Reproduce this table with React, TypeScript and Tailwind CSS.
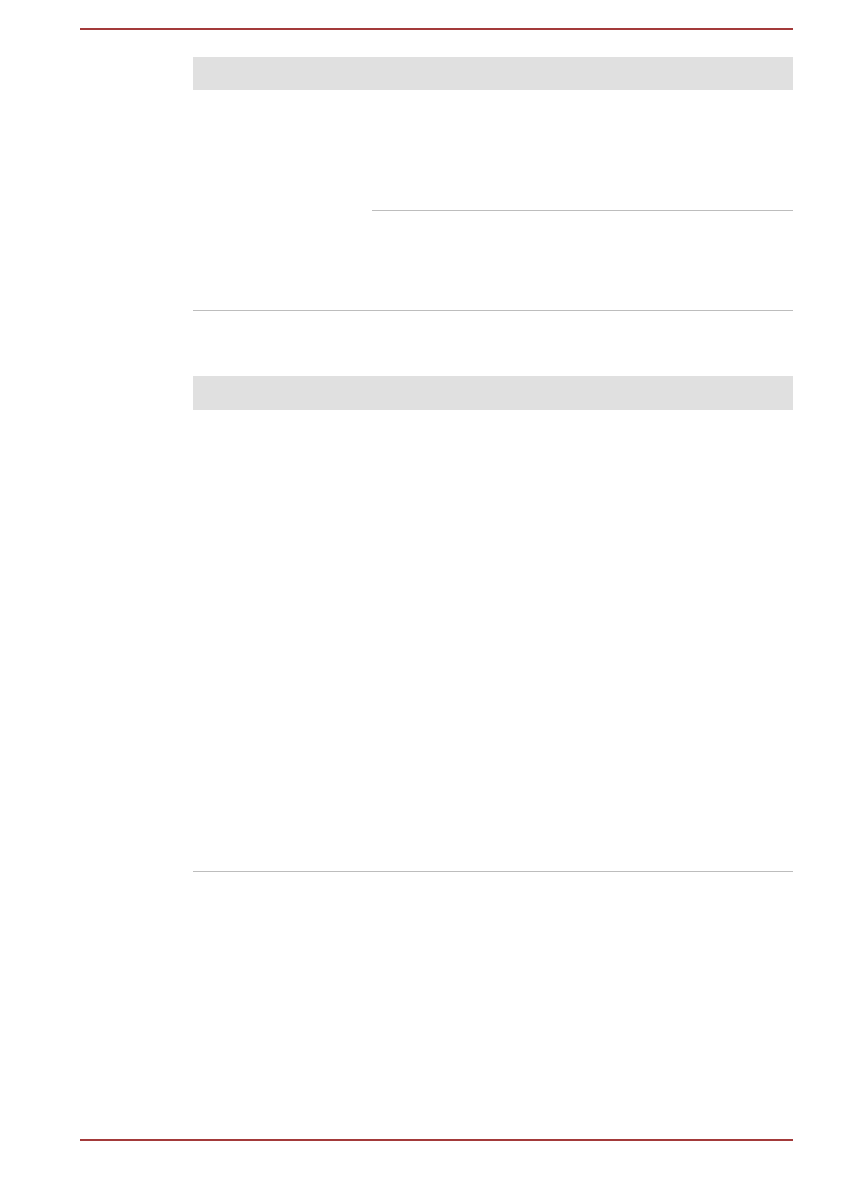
import React from 'react';

const App = () => {
  return (
    <div className="w-[845px] h-[1191px] bg-white pl-[80px] pr-[52px] pt-[28px] font-['Liberation_Sans',sans-serif]">
      {/* header rule */}
      <div className="h-[2px] bg-[#a33a3a]" />

      <div className="ml-[113px] mt-[27px]">
        {/* table 1 */}
        <div className="h-[33px] bg-[#e0e0e0]" />
        <div className="flex border-b border-[#bdbdbd]">
          <div className="w-[179px]" />
          <div className="flex-1">
            <div className="h-[121px] border-b border-[#bdbdbd]" />
            <div className="h-[99px]" />
          </div>
        </div>

        {/* table 2 */}
        <div className="mt-[65px] h-[34px] bg-[#e0e0e0]" />
        <div className="flex h-[462px] border-b border-[#bdbdbd]">
          <div className="w-[179px]" />
          <div className="flex-1" />
        </div>
      </div>

      {/* footer rule */}
      <div className="mt-[267px] h-[2px] bg-[#a33a3a]" />
    </div>
  );
};

export default App;
